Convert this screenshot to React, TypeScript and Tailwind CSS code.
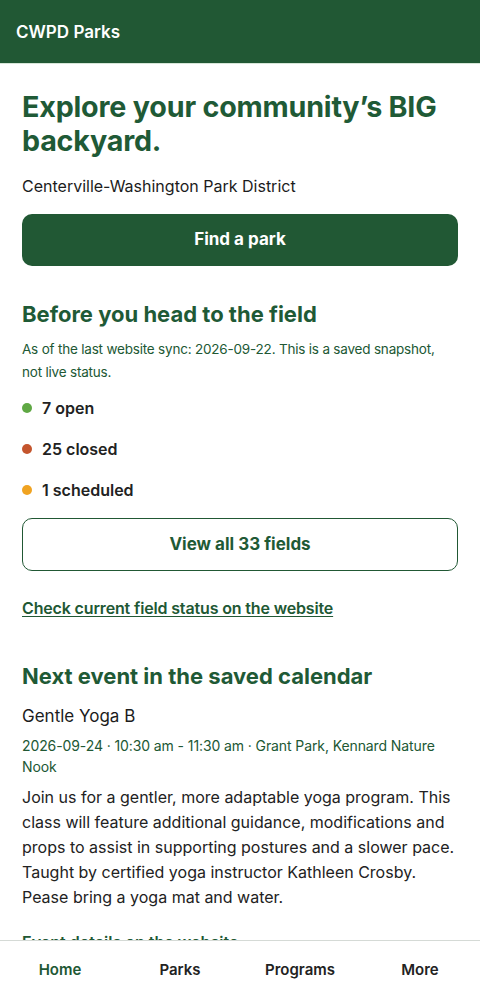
const statuses = [
  { label: "7 open", dot: "bg-[#5fa844]" },
  { label: "25 closed", dot: "bg-[#c4552d]" },
  { label: "1 scheduled", dot: "bg-[#f0a321]" },
];

const tabs = ["Home", "Parks", "Programs", "More"];

export default function App() {
  return (
    <div className="min-h-screen bg-white font-['Inter',sans-serif] text-[#1c1c1c]">
      <header className="h-[64px] bg-[#215834] border-b border-[#d6e6d8] flex items-center px-4 pt-[3px]">
        <span className="text-white text-[17px] font-semibold">CWPD Parks</span>
      </header>

      <main className="px-[22px] pt-[26px] pb-[80px]">
        <h1 className="text-[28.7px] leading-[34px] font-bold text-[#1f5a36] tracking-[-0.2px]">
          Explore your community’s BIG backyard.
        </h1>
        <p className="mt-[16px] text-[16px] leading-[24px]">Centerville-Washington Park District</p>
        <button className="mt-[16px] w-full h-[52px] rounded-[10px] bg-[#215834] text-white text-[17px] font-bold">
          Find a park
        </button>

        <h2 className="mt-[33px] text-[22px] leading-[30px] font-bold text-[#1f5a36]">
          Before you head to the field
        </h2>
        <p className="mt-[9px] text-[13.5px] leading-[23px] tracking-[-0.2px] text-[#215834]">
          As of the last website sync: 2026-09-22. This is a saved snapshot, not live status.
        </p>
        <ul className="mt-[12px] flex flex-col gap-[17px]">
          {statuses.map((s) => (
            <li key={s.label} className="flex items-center gap-[10px] h-[24px]">
              <span className={`w-[10px] h-[10px] rounded-full ${s.dot}`} />
              <span className="text-[16px] font-semibold text-[#222]">{s.label}</span>
            </li>
          ))}
        </ul>
        <button className="mt-[16px] w-full h-[53px] rounded-[10px] border border-[#215834] bg-white text-[#1f5a36] text-[17px] font-bold">
          View all 33 fields
        </button>
        <a className="mt-[25px] block text-[16px] font-semibold tracking-[-0.15px] text-[#215834] underline underline-offset-2">
          Check current field status on the website
        </a>

        <h2 className="mt-[41px] text-[22px] leading-[30px] font-bold text-[#1f5a36]">
          Next event in the saved calendar
        </h2>
        <p className="mt-[13px] text-[17px] leading-[24px]">Gentle Yoga B</p>
        <p className="mt-[7px] text-[14px] leading-[21px] tracking-[-0.1px] text-[#215834]">
          2026-09-24 · 10:30 am - 11:30 am · Grant Park, Kennard Nature Nook
        </p>
        <p className="mt-[8px] text-[16px] leading-[25px] text-[#222]">
          Join us for a gentler, more adaptable yoga program. This class will feature additional guidance,
          modifications and props to assist in supporting postures and a slower pace. Taught by certified yoga
          instructor Kathleen Crosby. Pease bring a yoga mat and water.
        </p>
        <a className="mt-[20px] block text-[16px] leading-[24px] font-semibold text-[#215834] underline underline-offset-2">
          Event details on the website
        </a>
      </main>

      <nav className="fixed bottom-0 left-0 right-0 h-[60px] bg-white border-t border-[#d5dad6] grid grid-cols-4">
        {tabs.map((t, i) => (
          <div
            key={t}
            className={`flex items-center justify-center text-[15px] font-semibold ${
              i === 0 ? "text-[#215834]" : "text-[#222]"
            }`}
          >
            {t}
          </div>
        ))}
      </nav>
    </div>
  );
}
